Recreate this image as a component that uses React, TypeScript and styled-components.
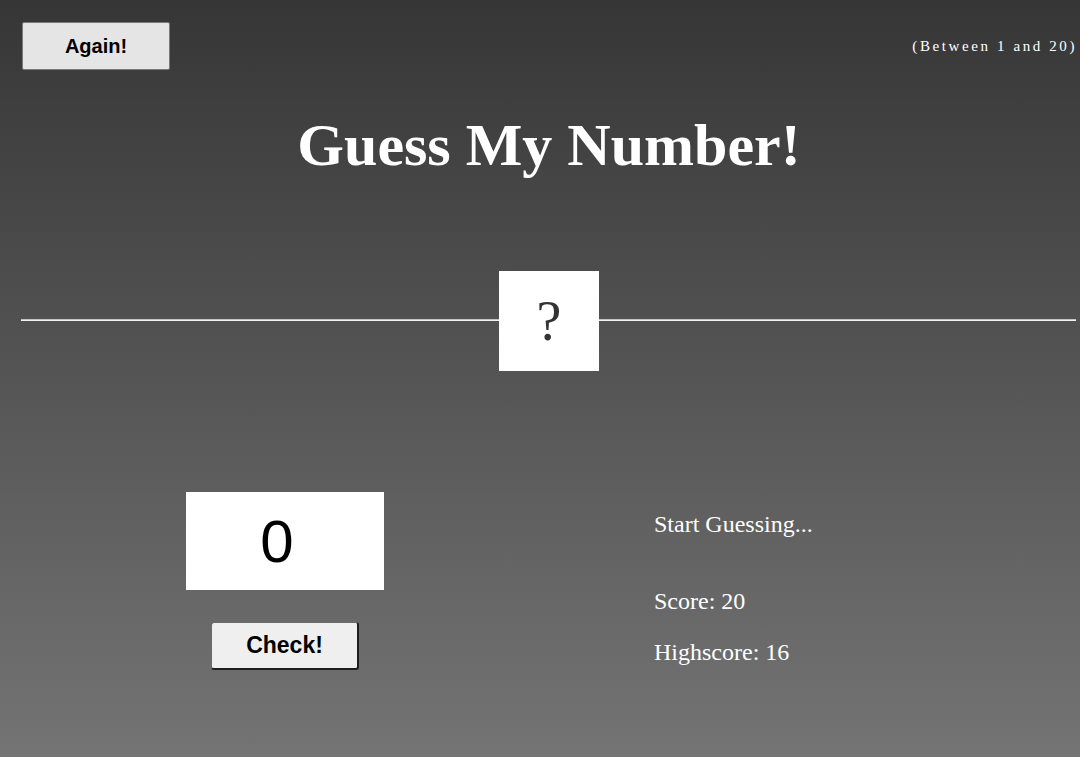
import React from "react";
import styled, { createGlobalStyle } from "styled-components";

const GlobalStyle = createGlobalStyle`
  html, body { margin: 0; padding: 0; }
  body {
    min-height: 757px;
    background: linear-gradient(to bottom, #363636 0%, #747474 100%);
    font-family: "Liberation Serif", "Times New Roman", serif;
    color: #fff;
  }
`;

const Page = styled.div`
  box-sizing: border-box;
  width: 1080px;
  height: 757px;
  padding: 22px 4px 0 22px;
  display: flex;
  flex-direction: column;
`;

const TopBar = styled.div`
  display: flex;
  justify-content: space-between;
  align-items: center;
  height: 48px;
`;

const Button = styled.button<{ $size: number; $bg: string; $outset?: boolean }>`
  box-sizing: border-box;
  width: 148px;
  height: 48px;
  padding: 0;
  background: ${(p) => p.$bg};
  color: #000;
  font-family: "Liberation Sans", Arial, sans-serif;
  font-weight: bold;
  font-size: ${(p) => p.$size}px;
  cursor: pointer;
  border-radius: ${(p) => (p.$outset ? "3px" : "2px")};
  border-style: solid;
  border-width: ${(p) => (p.$outset ? "1px 2px 2px 1px" : "1px")};
  border-color: ${(p) => (p.$outset ? "#6a6a6a #1e1e1e #1e1e1e #6a6a6a" : "#7a7a7a")};
`;

const Range = styled.span`
  font-size: 15px;
  line-height: 18px;
  letter-spacing: 2.6px;
  margin-right: -1px;
`;

const Title = styled.h1`
  margin: 40px 0 0 0;
  text-align: center;
  font-size: 60px;
  line-height: 70px;
  font-weight: bold;
`;

const Divider = styled.div`
  margin-top: 91px;
  position: relative;
  height: 100px;
  display: flex;
  justify-content: center;
  align-items: center;
`;

const Line = styled.div`
  position: absolute;
  left: -1px;
  right: 0;
  top: 48px;
  height: 0;
  border-top: 1px solid #c4c4c4;
  border-bottom: 1px solid #f2f2f2;
`;

const SecretBox = styled.div`
  position: relative;
  width: 100px;
  height: 100px;
  background: #fff;
  color: #333;
  font-size: 56px;
  line-height: 60px;
  display: flex;
  align-items: center;
  justify-content: center;
`;

const Main = styled.main`
  margin-top: 121px;
  display: grid;
  grid-template-columns: 1fr 1fr;
`;

const LeftCol = styled.section`
  display: flex;
  flex-direction: column;
  align-items: center;
  gap: 32px;
  margin-left: -1px;
`;

const GuessBox = styled.div`
  box-sizing: border-box;
  width: 198px;
  height: 98px;
  background: #fff;
  color: #000;
  font-family: "Liberation Sans", Arial, sans-serif;
  font-size: 60px;
  display: flex;
  align-items: center;
  justify-content: center;
  padding-right: 16px;
`;

const RightCol = styled.section`
  padding: 18px 0 0 105px;
  display: flex;
  flex-direction: column;
`;

const Info = styled.p<{ $gap: number }>`
  margin: ${(p) => p.$gap}px 0 0 0;
  font-size: 24px;
  line-height: 28px;
`;

export default function App() {
  return (
    <>
      <GlobalStyle />
      <Page>
        <header>
          <TopBar>
            <Button $size={20} $bg="#e5e5e5">Again!</Button>
            <Range>(Between 1 and 20)</Range>
          </TopBar>
          <Title>Guess My Number!</Title>
          <Divider>
            <Line />
            <SecretBox>?</SecretBox>
          </Divider>
        </header>
        <Main>
          <LeftCol>
            <GuessBox>0</GuessBox>
            <Button $size={23} $bg="#efefef" $outset>Check!</Button>
          </LeftCol>
          <RightCol>
            <Info $gap={0}>Start Guessing...</Info>
            <Info $gap={49}>Score: 20</Info>
            <Info $gap={23}>Highscore: 16</Info>
          </RightCol>
        </Main>
      </Page>
    </>
  );
}
